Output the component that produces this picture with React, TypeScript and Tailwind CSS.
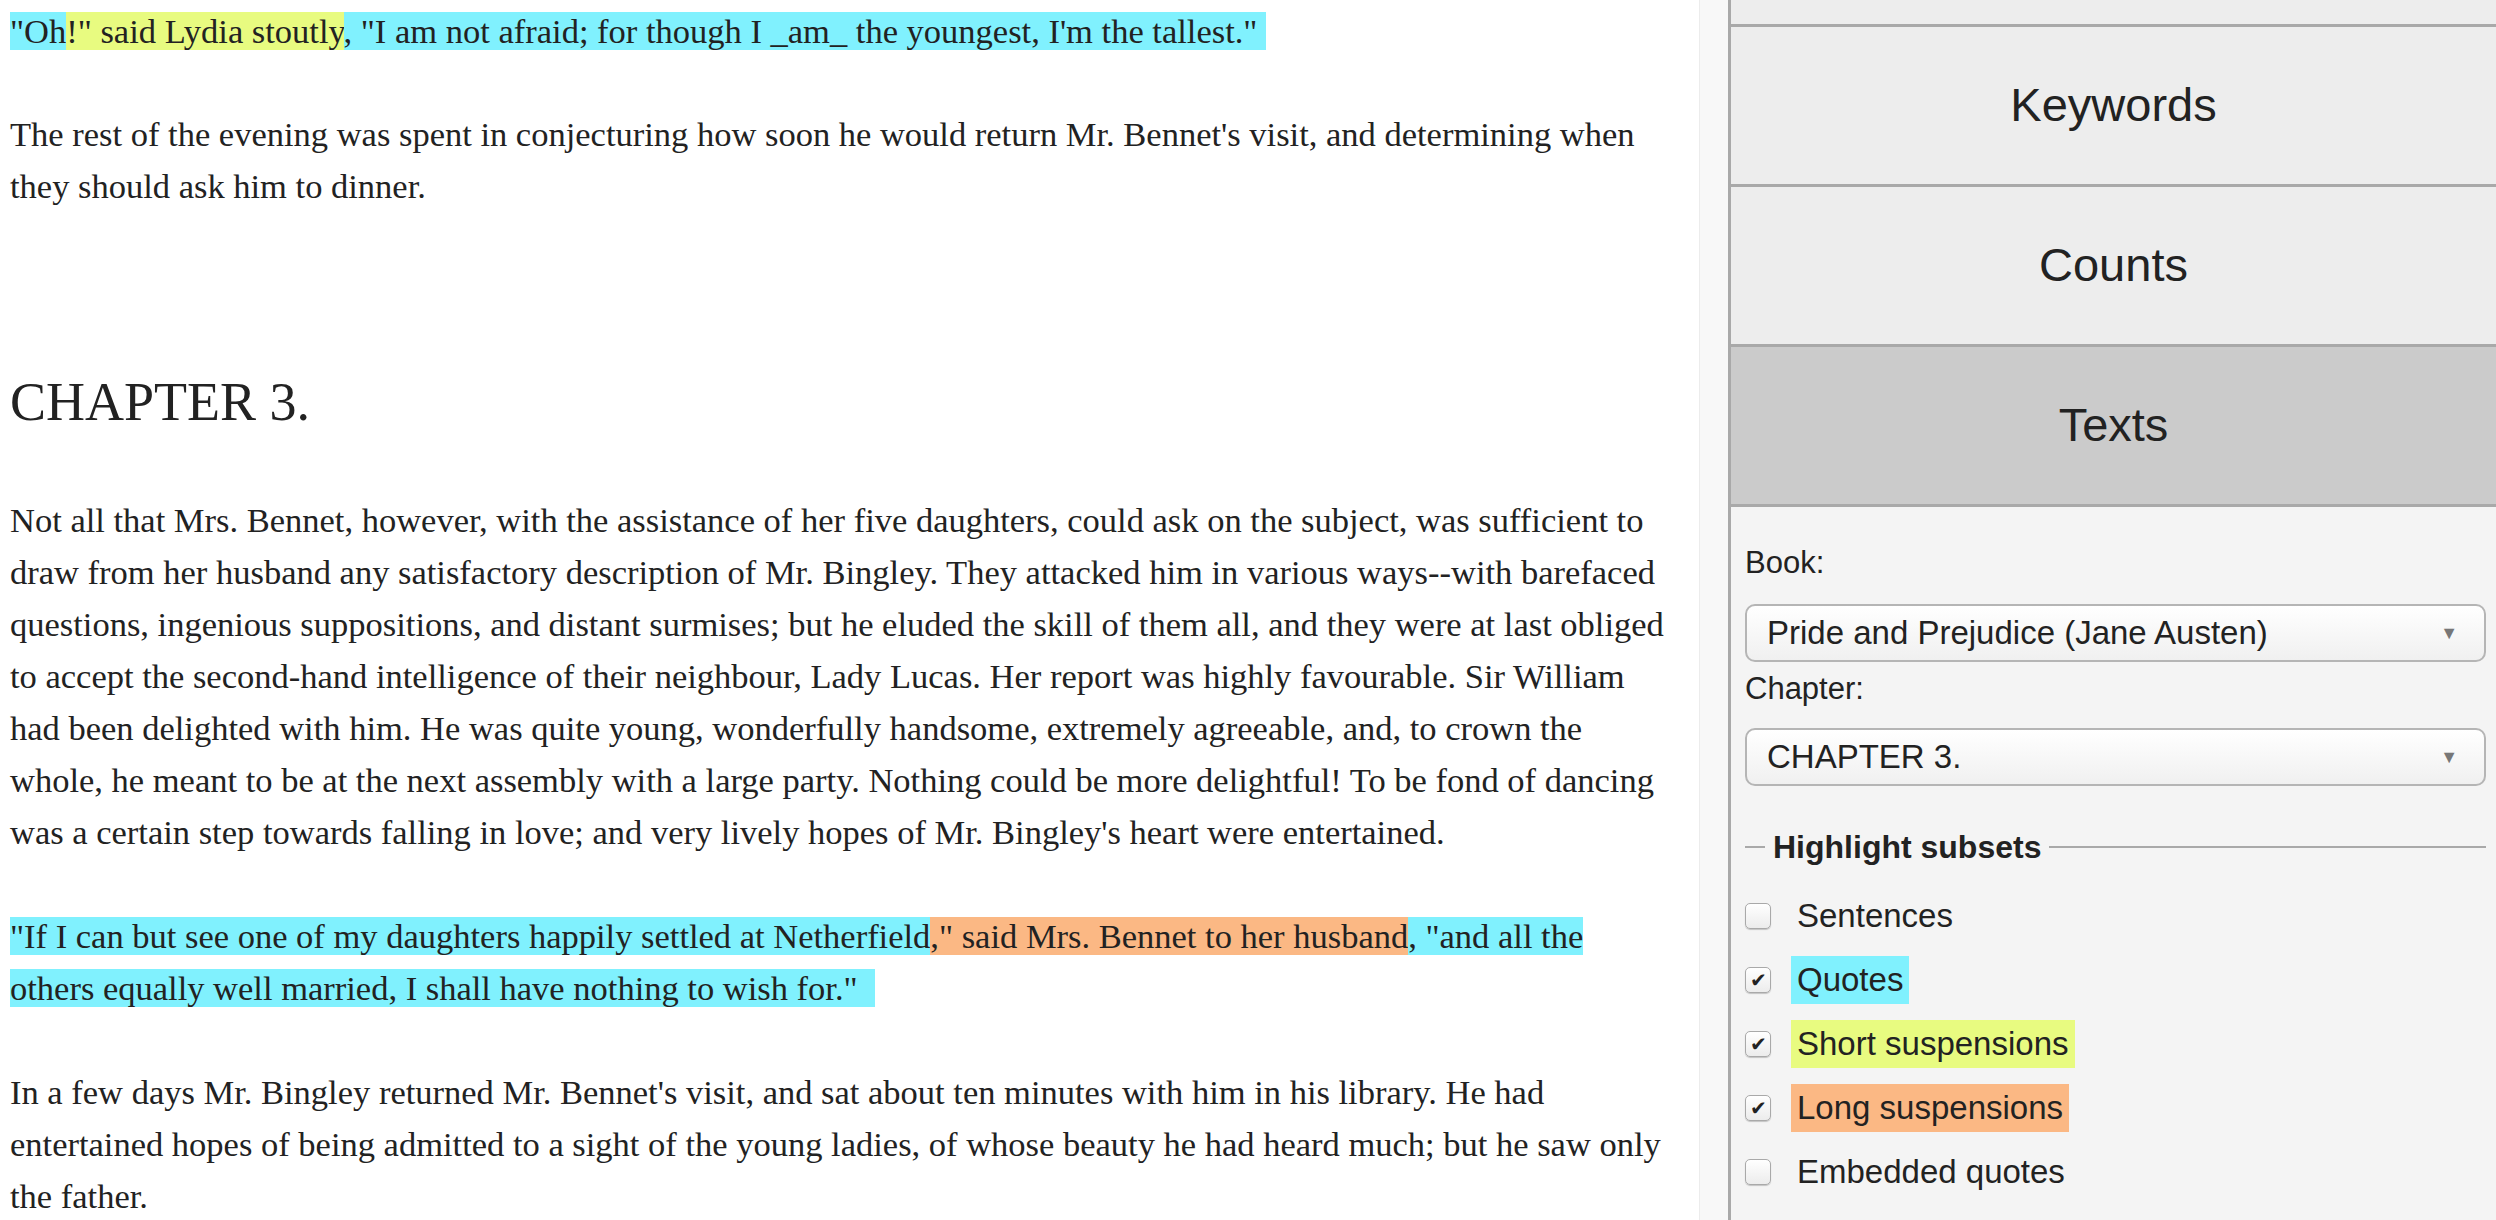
import React from "react";

const C = "bg-[#80f1fe]";
const Y = "bg-[#e8fb80]";
const O = "bg-[#fbb884]";

function Check({ on }: { on: boolean }) {
  return (
    <span className="w-[26px] h-[26px] shrink-0 rounded-[5px] border border-[#a9a9a9] bg-gradient-to-b from-white to-[#ececec] shadow-[0_1px_1px_rgba(0,0,0,0.2)] flex items-center justify-center text-[20px] leading-none text-[#222]">
      {on ? "✔" : ""}
    </span>
  );
}

function Select({ label }: { label: string }) {
  return (
    <div className="h-[58px] rounded-[10px] border-2 border-[#b5b5b5] bg-gradient-to-b from-white to-[#f0f0f0] flex items-center justify-between pl-[20px] pr-[26px] text-[33px] text-[#222]">
      <span>{label}</span>
      <span className="text-[18px] text-[#777]">▼</span>
    </div>
  );
}

export default function App() {
  const sans = { fontFamily: '"Liberation Sans", Arial, sans-serif' };
  return (
    <div className="w-[2496px] h-[1220px] overflow-hidden flex bg-white">
      <div className="w-[1699px] shrink-0 pl-[10px] pr-[24px] text-[#222] text-[34.5px] leading-[52px]" style={{ fontFamily: '"Liberation Serif", "Times New Roman", serif' }}>
        <p className="mt-[5px]">
          <span className={C}>"Oh</span><span className={Y}>!" said Lydia stoutly</span><span className={C}>, "I am not afraid; for though I _am_ the youngest, I'm the tallest."&nbsp;</span>
        </p>
        <p className="mt-[51px]">The rest of the evening was spent in conjecturing how soon he would return Mr. Bennet's visit, and determining when they should ask him to dinner.</p>
        <h2 className="mt-[158px] text-[54px] leading-[64px]">CHAPTER 3.</h2>
        <p className="mt-[60px]">Not all that Mrs. Bennet, however, with the assistance of her five daughters, could ask on the subject, was sufficient to draw from her husband any satisfactory description of Mr. Bingley. They attacked him in various ways--with barefaced questions, ingenious suppositions, and distant surmises; but he eluded the skill of them all, and they were at last obliged to accept the second-hand intelligence of their neighbour, Lady Lucas. Her report was highly favourable. Sir William had been delighted with him. He was quite young, wonderfully handsome, extremely agreeable, and, to crown the whole, he meant to be at the next assembly with a large party. Nothing could be more delightful! To be fond of dancing was a certain step towards falling in love; and very lively hopes of Mr. Bingley's heart were entertained.</p>
        <p className="mt-[52px]">
          <span className={C}>"If I can but see one of my daughters happily settled at Netherfield</span><span className={O}>," said Mrs. Bennet to her husband</span><span className={C}>, "and all the others equally well married, I shall have nothing to wish for."&nbsp;&nbsp;</span>
        </p>
        <p className="mt-[52px]">In a few days Mr. Bingley returned Mr. Bennet's visit, and sat about ten minutes with him in his library. He had entertained hopes of being admitted to a sight of the young ladies, of whose beauty he had heard much; but he saw only the father.</p>
      </div>
      <div className="w-[29px] shrink-0 bg-[#f8f8f8] border-l border-[#ececec]" />
      <div className="flex-1 border-l-[3px] border-[#a9a9a9] bg-[#f4f4f4] flex flex-col" style={sans}>
        <div className="h-[27px] bg-[#ededed] border-b-[3px] border-[#a9a9a9] shrink-0" />
        {["Keywords", "Counts", "Texts"].map((t) => (
          <div key={t} className={`h-[160px] shrink-0 flex items-center justify-center text-[47px] text-[#222] border-b-[3px] border-[#a9a9a9] ${t === "Texts" ? "bg-[#cbcbcb]" : "bg-[#ededed]"}`}>
            {t}
          </div>
        ))}
        <div className="pl-[14px] pr-[10px] pt-[36px] text-[#222] text-[31px]">
          <div className="leading-[40px]">Book:</div>
          <div className="mt-[21px]"><Select label="Pride and Prejudice (Jane Austen)" /></div>
          <div className="leading-[40px] mt-[7px]">Chapter:</div>
          <div className="mt-[19px]"><Select label="CHAPTER 3." /></div>
          <div className="mt-[41px] flex items-center gap-[8px] h-[40px]">
            <div className="w-[20px] h-[2px] bg-[#a9a9a9]" />
            <span className="font-bold text-[32px]">Highlight subsets</span>
            <div className="flex-1 h-[2px] bg-[#a9a9a9]" />
          </div>
          <div className="mt-[25px] flex flex-col gap-[16px] text-[33px]">
            {[
              ["Sentences", false, ""],
              ["Quotes", true, C],
              ["Short suspensions", true, Y],
              ["Long suspensions", true, O],
              ["Embedded quotes", false, ""],
            ].map(([l, on, bg]) => (
              <div key={l as string} className="flex items-center h-[48px]">
                <Check on={on as boolean} />
                <span className={`ml-[20px] px-[6px] leading-[48px] ${bg}`}>{l as string}</span>
              </div>
            ))}
          </div>
        </div>
      </div>
    </div>
  );
}
